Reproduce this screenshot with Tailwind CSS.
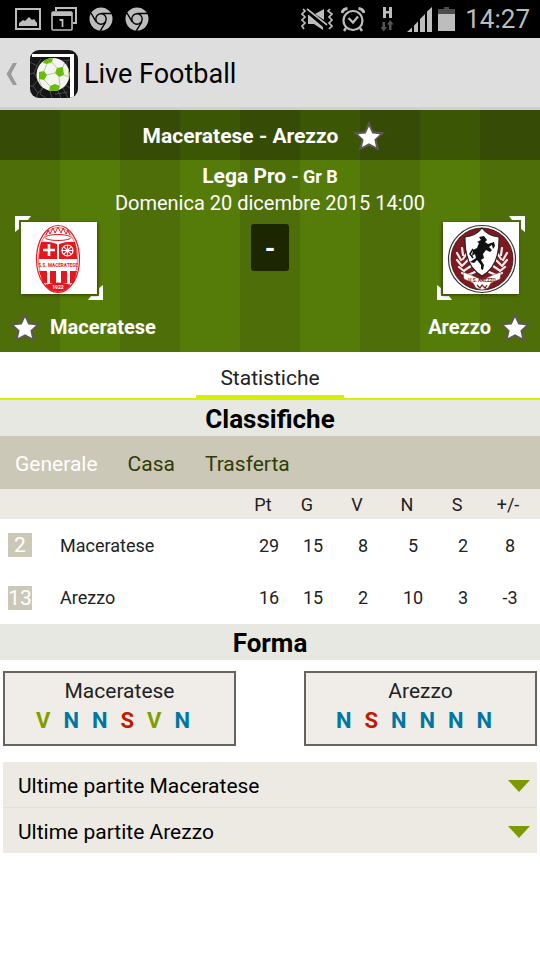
<!DOCTYPE html>
<html lang="it">
<head>
    <meta charset="UTF-8">
    <meta name="viewport" content="width=device-width, initial-scale=1.0">
    <title>Live Football</title>
    <script src="https://cdn.jsdelivr.net/npm/@tailwindcss/browser@4"></script>
</head>
<body class="bg-white min-h-screen font-['Roboto',sans-serif] text-[#222]">

    <!-- Shared symbols -->
    <svg class="hidden">
        <symbol id="star" viewBox="0 0 32 30">
            <path d="M16 0 L20.6 10.4 L32 11.2 L23.6 18.6 L26.2 29.5 L16 24.8 L5.8 29.5 L8.4 18.6 L0 11.2 L11.4 10.4Z" fill="#5e5852"/>
            <path d="M16 5.5 L19.3 12.4 L27 13.2 L21.4 18.4 L23 26 L16 22.2 L9 26 L10.6 18.4 L5 13.2 L12.7 12.4Z" fill="#fff"/>
        </symbol>
        <symbol id="chrome" viewBox="0 0 24 24">
            <circle cx="12" cy="12" r="11.5" fill="#bdbdbd"/>
            <path d="M12 6.5H22.4M7.2 14.8L2 6M16.8 14.8L11.4 23.6" stroke="#000" stroke-width="1.4"/>
            <circle cx="12" cy="12" r="5.2" fill="#bdbdbd" stroke="#000" stroke-width="1.4"/>
        </symbol>
    </svg>

    <!-- Status bar -->
    <div class="flex items-center justify-between h-[38px] bg-black pl-[15px] pr-[10px]">
        <div class="flex items-center gap-3">
            <svg class="w-[26px] h-[22px]" viewBox="0 0 26 22" fill="none">
                <rect x="1" y="1" width="24" height="20" stroke="#bdbdbd" stroke-width="2"/>
                <path d="M4 18V15L8 12L10 13L14 9L17 12L19 11L22 15V18Z" fill="#bdbdbd"/>
            </svg>
            <svg class="w-[26px] h-6 -ml-0.5" viewBox="0 0 26 24" fill="none">
                <path d="M5 4V1H25V16H22" stroke="#bdbdbd" stroke-width="2"/>
                <rect x="1" y="5" width="20" height="18" rx="1" stroke="#bdbdbd" stroke-width="1.6"/>
                <path d="M1 5H21V9H1Z" fill="#bdbdbd"/>
                <path d="M8.5 13H11.5V20" stroke="#bdbdbd" stroke-width="1.8"/>
            </svg>
            <svg class="w-6 h-6"><use href="#chrome"/></svg>
            <svg class="w-6 h-6"><use href="#chrome"/></svg>
        </div>
        <div class="flex items-center">
            <svg class="w-8 h-[22px] mr-2" viewBox="0 0 32 22" fill="none">
                <path d="M2 1L4 3L1 6L4 9L1 12L4 15L1 18L3 21M29 1L27 3L31 6L28 9L31 12L28 15L31 18L28 21" stroke="#bdbdbd" stroke-width="1.7"/>
                <path d="M7 7V16H13L22 22V19L8 7ZM14 6L23 1V12Z" fill="#bdbdbd"/>
                <path d="M6 1L26 17" stroke="#bdbdbd" stroke-width="1.8"/>
                <path d="M6 3L26 19" stroke="#000" stroke-width="1.2"/>
            </svg>
            <svg class="w-6 h-[25px] mr-[15px]" viewBox="0 0 24 25" fill="none" stroke="#bdbdbd">
                <circle cx="12" cy="13.5" r="9.5" stroke-width="2.2"/>
                <path d="M7.5 11L12 15.5L17 9.5" stroke-width="2.2"/>
                <path d="M1 6Q2 2 6.5 1.5M23 6Q22 2 17.5 1.5" stroke-width="3"/>
                <path d="M5 21L3 24M19 21L21 24" stroke-width="2.4"/>
            </svg>
            <svg class="w-[15px] h-[26px] mr-3" viewBox="0 0 15 26">
                <path d="M3 1H6V5H9V1H12V12H9V7.5H6V12H3Z" fill="#bdbdbd"/>
                <path d="M2.5 16H5V21H7L3.7 25.5L0.5 21H2.5ZM9 24H11.5V18.5H13.5L10.2 14L7 18.5H9Z" fill="#555"/>
            </svg>
            <svg class="w-[25px] h-[25px] mr-1.5" viewBox="0 0 25 25" fill="#bdbdbd">
                <path d="M0 25L5 20.5V25ZM7 25V18.5L11 14.5V25ZM13 25V12L18 7V25ZM20 25V4.5L25 0V25Z"/>
            </svg>
            <svg class="w-[17px] h-6 mr-2.5" viewBox="0 0 17 24">
                <path d="M0 2H6V0H11V2H17V7H0Z" fill="#4d4d4d"/>
                <path d="M0 7H17V24H0Z" fill="#bdbdbd"/>
            </svg>
            <span class="text-[26px] leading-8 text-[#bdbdbd]">14:27</span>
        </div>
    </div>

    <!-- Action bar -->
    <header class="flex items-center h-[72px] bg-[#dedede] border-b-3 border-[#d0d0d0] pl-1.5 pt-[3px]">
        <button class="flex items-center" aria-label="Indietro">
            <svg class="w-3 h-[22px] mr-3" viewBox="0 0 12 22"><path d="M7 0H11L5 11L11 22H7L0.5 11Z" fill="#9a9a9a"/></svg>
            <svg class="w-12 h-12" viewBox="0 0 48 48">
                <defs>
                    <clipPath id="appClip"><rect width="48" height="48" rx="9"/></clipPath>
                    <clipPath id="ballClip"><circle cx="23" cy="24.5" r="16.5"/></clipPath>
                </defs>
                <g clip-path="url(#appClip)">
                    <rect width="48" height="48" fill="#161616"/>
                    <path d="M0 12L7 16L4 23L8 30L3 36L8 43L6 48M8 30L13 37L10 44L16 48M13 37L20 41L22 48M20 41L28 40L31 48M28 40L34 34L40 38M31 11L40 10M37 10V20L40 23M37 28L33 38L38 48M0 24L4 23M0 36H3M8 43L13 37M25 44L32 43L38 42M7 16L11 9" fill="none" stroke="#555" stroke-width="0.8"/>
                    <path d="M2 4H44V48H40V7H2Z" fill="#fff"/>
                    <circle cx="23" cy="24.5" r="16.5" fill="#f4f6ee"/>
                    <g clip-path="url(#ballClip)">
                        <path d="M15 9L23 8L22 12L17 14L13 13ZM27 18L33 17L34 25L29 27L25 23ZM9 22L14 21L17 25L14 30L9 29ZM20 36L25 34L30 36L28 42H19ZM38 20L41 24L39 29Z" fill="#68bd08"/>
                        <path d="M17 14L14 21M22 12L27 18M17 25L25 23M14 30L20 36M29 27L30 36M33 17L35 12M34 25L39 27M9 29L11 36" fill="none" stroke="#a9b99a" stroke-width="0.8"/>
                    </g>
                </g>
            </svg>
        </button>
        <h1 class="ml-1.5 text-[27px] leading-8 text-black">Live Football</h1>
    </header>

    <!-- Match header -->
    <section class="bg-[repeating-linear-gradient(90deg,#4e6e0a_0_60px,#557b08_60px_120px)] text-white">
        <div class="flex items-center justify-center h-[50px] gap-[15px] bg-black/30 pr-3 pt-0.5">
            <h2 class="text-[21px] leading-7 font-bold">Maceratese - Arezzo</h2>
            <button aria-label="Segui la partita"><svg class="w-8 h-[30px]"><use href="#star"/></svg></button>
        </div>
        <div class="pt-[3px] -mb-px text-center">
            <p class="text-[21px] leading-[27px] font-bold">Lega Pro <span class="text-[18px]">- Gr B</span></p>
            <p class="text-[20px] leading-[27px]">Domenica 20 dicembre 2015 14:00</p>
        </div>
        <div class="flex justify-between px-[15px]">
            <div class="relative p-1.5">
                <svg class="absolute inset-0 w-[88px] h-[84px]" viewBox="0 0 88 84">
                    <path d="M0 0H16L13 4H4V13L0 16ZM88 84H73L76 80H84V72L88 69Z" fill="#fff"/>
                </svg>
                <svg class="relative w-[76px] h-[72px] bg-white shadow-[1px_1px_3px_#2f4404]" viewBox="0 0 76 72">
                    <ellipse cx="37" cy="37" rx="21.5" ry="33.5" fill="#fff" stroke="#e31b23" stroke-width="1.2"/>
                    <ellipse cx="37" cy="37" rx="19.5" ry="31.5" fill="#fff" stroke="#e31b23" stroke-width="0.6"/>
                    <path d="M25 13L27 8L29 12L32 6L34 11L37 5L40 11L42 6L45 12L47 8L49 13" fill="none" stroke="#e31b23" stroke-width="1"/>
                    <ellipse cx="37" cy="15.5" rx="13" ry="3" fill="#fff" stroke="#e31b23" stroke-width="1"/>
                    <path d="M20 20Q28 19 36 22V37H18Q18 27 20 20ZM38 22Q46 19 54 20Q56 27 56 37H38Z" fill="#e5161e"/>
                    <path d="M28 22V34M22 28H34" stroke="#fff" stroke-width="2.6"/>
                    <g fill="none" stroke="#fff" stroke-width="1.2">
                        <circle cx="46.5" cy="28.5" r="5.5"/>
                        <path d="M46.5 23V34M41 28.5H52M42.6 24.600L50.4 32.4M50.4 24.6L42.6 32.4"/>
                    </g>
                    <text x="37" y="45" text-anchor="middle" font-size="4.7" font-weight="700" fill="#e31b23">S.S. MACERATESE</text>
                    <path d="M18 49H26V61H22ZM29 49H35V61H29ZM40 49H46V61H40ZM49 49H56L53 61H49Z" fill="#e5161e"/>
                    <path d="M24 63Q37 58 50 63Q44 70 37 70Q30 70 24 63Z" fill="#e5161e"/>
                    <text x="37" y="67" text-anchor="middle" font-size="5" font-weight="700" fill="#fff">1922</text>
                </svg>
            </div>
            <span class="mt-2 w-[38px] h-[47px] pt-0.5 rounded-[3px] bg-[#1c2702] text-center text-[27px] leading-[47px] font-bold">-</span>
            <div class="relative p-1.5">
                <svg class="absolute inset-0 w-[88px] h-[84px]" viewBox="0 0 88 84">
                    <path d="M88 0H72L75 4H84V13L88 16ZM0 84H15L12 80H4V72L0 69Z" fill="#fff"/>
                </svg>
                <svg class="relative w-[76px] h-[72px] bg-white shadow-[-1px_1px_3px_#2f4404]" viewBox="0 0 76 72">
                    <circle cx="39" cy="37" r="33.5" fill="#fff" stroke="#333" stroke-width="1.2"/>
                    <circle cx="39" cy="37" r="31" fill="#7c1a20" stroke="#3a1012" stroke-width="0.8"/>
                    <!-- laurel -->
                    <g fill="none" stroke="#f4eded" stroke-width="2.2" stroke-linecap="round">
                        <path d="M19 26L20 33M14 31L18 38M14 38L19 44M16 45L21 49M19 51L25 54M24 31L20 37M25 38L20 43M28 44L22 48M32 50L25 53"/>
                        <path d="M59 26L58 33M64 31L60 38M64 38L59 44M62 45L57 49M59 51L53 54M54 31L58 37M53 38L58 43M50 44L56 48M46 50L53 53"/>
                    </g>
                    <path d="M22 15Q33 14 39 6Q45 14 56 15Q57 44 39 54Q21 44 22 15Z" fill="#fff" stroke="#222" stroke-width="1.2"/>
                    <!-- rearing horse -->
                    <path d="M36 15L41 14L44 18L42 20L45 22L51 20L52 24L50 27L49 23L46 25L49 28L47 30L43 28L40 32L41 36L38 38L41 43L40 48L38 47L38 43L34 38L31 41L27 40L30 38L33 36L32 32L29 34L30 28L34 26L36 21L34 20L38 18Z" fill="#111"/>
                    <path d="M30 36L27 32L30 27" fill="none" stroke="#111" stroke-width="1.5"/>
                    <path d="M20 50L28 53L39 58L50 53L58 50L57 57L48 61L45 66L39 68L33 66L30 61L21 57Z" fill="#fff" stroke="#555" stroke-width="0.5"/>
                    <path d="M34 63L37 66L39 63L42 66L44 63" fill="none" stroke="#7c1a20" stroke-width="1.2"/>
                    <text x="39" y="60" text-anchor="middle" font-size="4.7" font-weight="700" fill="#7c1a20">U.S. AREZZO</text>
                </svg>
            </div>
        </div>
        <div class="flex items-center justify-between h-[52px] px-[9px] pt-0.5 text-[20px] leading-7 font-bold">
            <div class="flex items-center gap-[9px]">
                <button aria-label="Segui Maceratese"><svg class="w-8 h-[30px]"><use href="#star"/></svg></button>
                <span>Maceratese</span>
            </div>
            <div class="flex items-center gap-2">
                <span>Arezzo</span>
                <button aria-label="Segui Arezzo"><svg class="w-8 h-[30px]"><use href="#star"/></svg></button>
            </div>
        </div>
    </section>

    <!-- Tabs -->
    <nav class="flex justify-center h-12 border-b-2 border-[#d5f000]">
        <button class="px-6 pt-2 border-b-3 border-[#d5f000] text-[21px] leading-7">Statistiche</button>
    </nav>

    <!-- Standings -->
    <h2 class="h-9 bg-[#e7e8e2] text-center text-[26px] leading-[39px] font-bold text-black">Classifiche</h2>
    <div class="flex items-center gap-[30px] h-[53px] bg-[#ccc8b7] px-[15px] pt-[3px] text-[21px] leading-7 text-[#2f3c06]">
        <button class="text-white">Generale</button>
        <button>Casa</button>
        <button>Trasferta</button>
    </div>
    <table class="w-full table-fixed text-center text-[18px] leading-6">
        <thead class="bg-[#edeae3]">
            <tr class="h-[30px]">
                <th class="w-[60px]" aria-label="Posizione"></th>
                <th aria-label="Squadra"></th>
                <th class="w-[38px] font-normal pr-3 pt-0.5">Pt</th>
                <th class="w-[50px] font-normal pr-3 pt-0.5">G</th>
                <th class="w-[50px] font-normal pr-3 pt-0.5">V</th>
                <th class="w-[50px] font-normal pr-3 pt-0.5">N</th>
                <th class="w-[50px] font-normal pr-3 pt-0.5">S</th>
                <th class="w-[52px] font-normal pr-3 pt-0.5">+/-</th>
            </tr>
        </thead>
        <tbody>
            <tr class="h-[52px]">
                <td class="pl-2"><span class="block w-6 h-6 bg-[#ccc8b7] text-[21px] leading-6 text-white">2</span></td>
                <td class="text-left pt-0.5">Maceratese</td>
                <td class="pt-0.5">29</td>
                <td class="pt-0.5">15</td>
                <td class="pt-0.5">8</td>
                <td class="pt-0.5">5</td>
                <td class="pt-0.5">2</td>
                <td class="pt-0.5 pr-2">8</td>
            </tr>
            <tr class="h-[53px]">
                <td class="pl-2"><span class="block w-6 h-6 bg-[#ccc8b7] text-[21px] leading-6 text-white">13</span></td>
                <td class="text-left">Arezzo</td>
                <td>16</td>
                <td>15</td>
                <td>2</td>
                <td>10</td>
                <td>3</td>
                <td class="pr-2">-3</td>
            </tr>
        </tbody>
    </table>

    <!-- Form -->
    <h2 class="h-9 bg-[#e7e8e2] text-center text-[26px] leading-[39px] font-bold text-black">Forma</h2>
    <div class="flex gap-[68px] px-[3px] pt-[11px] text-center text-[21px] leading-[30px]">
        <div class="flex-1 h-[75px] border-2 border-[#666360] bg-[#f0ede8] pt-[3px]">
            <h3>Maceratese</h3>
            <div class="flex justify-center gap-[13px] pr-[13px] font-bold text-[22px] text-[#0077a3]">
                <span class="text-[#7f9f00]">V</span>
                <span>N</span>
                <span>N</span>
                <span class="text-[#bf1b00]">S</span>
                <span class="text-[#7f9f00]">V</span>
                <span>N</span>
            </div>
        </div>
        <div class="flex-1 h-[75px] border-2 border-[#666360] bg-[#f0ede8] pt-[3px]">
            <h3>Arezzo</h3>
            <div class="flex justify-center gap-[13px] pr-[13px] font-bold text-[22px] text-[#0077a3]">
                <span>N</span>
                <span class="text-[#bf1b00]">S</span>
                <span>N</span>
                <span>N</span>
                <span>N</span>
                <span>N</span>
            </div>
        </div>
    </div>

    <!-- Last matches -->
    <div class="mx-[3px] mt-4 bg-[#edeae3] text-[21px] leading-7 text-black">
        <button class="flex items-center justify-between w-full h-[46px] border-b border-[#e3e0da] pl-[15px] pr-[7px] pt-[3px]">
            Ultime partite Maceratese
            <svg class="w-[22px] h-3" viewBox="0 0 22 12"><path d="M0 0H22L11 12Z" fill="#7c9a00"/></svg>
        </button>
        <button class="flex items-center justify-between w-full h-[45px] pl-[15px] pr-[7px] pt-[3px]">
            Ultime partite Arezzo
            <svg class="w-[22px] h-3" viewBox="0 0 22 12"><path d="M0 0H22L11 12Z" fill="#7c9a00"/></svg>
        </button>
    </div>

</body>
</html>
